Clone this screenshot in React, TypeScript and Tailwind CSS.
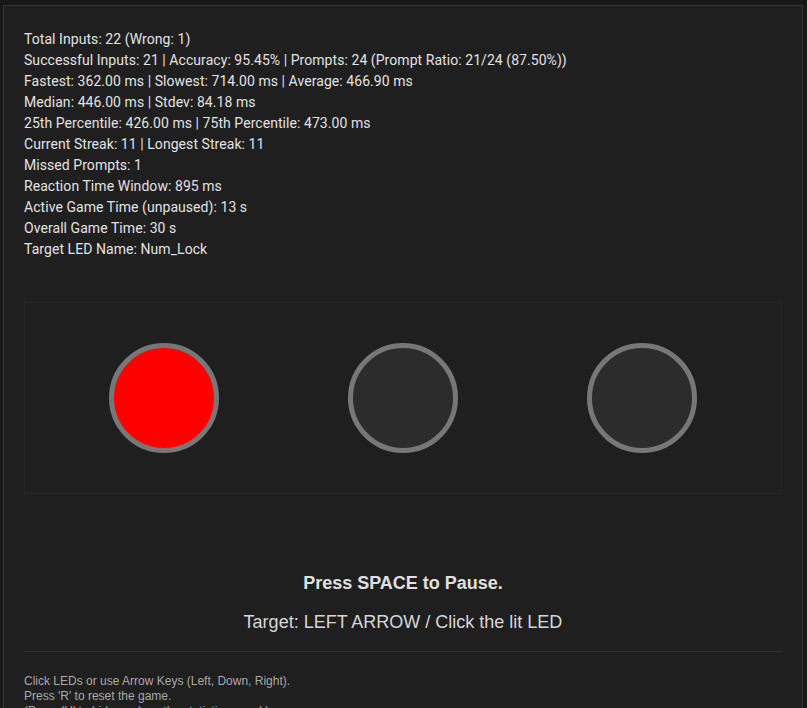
const STATS = [
  "Total Inputs: 22 (Wrong: 1)",
  "Successful Inputs: 21 | Accuracy: 95.45% | Prompts: 24 (Prompt Ratio: 21/24 (87.50%))",
  "Fastest: 362.00 ms | Slowest: 714.00 ms | Average: 466.90 ms",
  "Median: 446.00 ms | Stdev: 84.18 ms",
  "25th Percentile: 426.00 ms | 75th Percentile: 473.00 ms",
  "Current Streak: 11 | Longest Streak: 11",
  "Missed Prompts: 1",
  "Reaction Time Window: 895 ms",
  "Active Game Time (unpaused): 13 s",
  "Overall Game Time: 30 s",
  "Target LED Name: Num_Lock",
];

const LEDS = [
  { name: "left", lit: true },
  { name: "down", lit: false },
  { name: "right", lit: false },
];

export default function App() {
  return (
    <div className="min-h-screen overflow-hidden bg-[#181818] pl-[3px] pr-[4px] pt-[5px]">
      <div className="h-[720px] border border-[#363636] bg-[#1f1f1f] px-5 pt-[23px]">
        <div className="font-['Roboto',sans-serif] text-[14px] leading-[21px] tracking-[0.06px] text-[#e2e2e2]">
          {STATS.map((line) => (
            <div key={line}>{line}</div>
          ))}
        </div>

        <div className="mt-[42px] flex justify-around border border-dotted border-[#2e2e2e] px-5">
          {LEDS.map((led) => (
            <div
              key={led.name}
              className={
                led.lit
                  ? "my-[40px] h-[110px] w-[110px] rounded-full border-[5px] border-[#777] bg-[#ff0000]"
                  : "my-[40px] h-[110px] w-[110px] rounded-full border-[5px] border-[#777] bg-[#2c2c2c]"
              }
            />
          ))}
        </div>

        <div className="font-['Liberation_Sans',Arial,sans-serif]">
          <div className="mt-[77px] text-center text-[18px] font-bold leading-[24px] text-[#e0e0e0]">
            Press SPACE to Pause.
          </div>
          <div className="mt-[15px] text-center text-[18px] leading-[24px] text-[#d6d6d6]">
            Target: LEFT ARROW / Click the lit LED
          </div>
          <div className="mt-[17px] h-px bg-[#333]" />
          <div className="mt-[22px] text-[12px] leading-[15px] text-[#a8a8a8]">
            <div>Click LEDs or use Arrow Keys (Left, Down, Right).</div>
            <div>Press 'R' to reset the game.</div>
            <div>(Press 'H' to hide or show the statistics panel.)</div>
          </div>
        </div>
      </div>
    </div>
  );
}
